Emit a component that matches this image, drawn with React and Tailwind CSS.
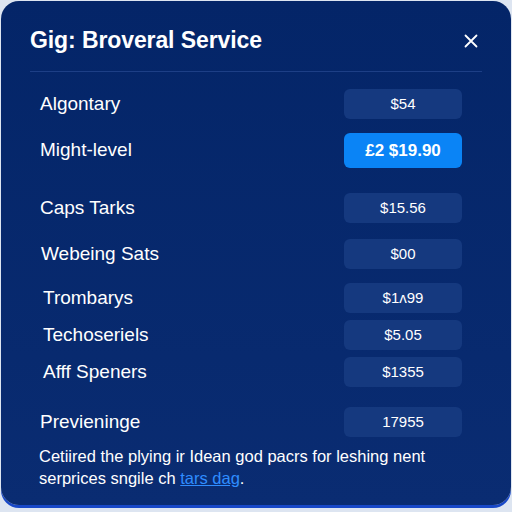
import React from "react";

const rows = [
  { label: "Algontary", price: "$54", gap: "mt-[17px]", indent: "pl-[10px]" },
  { label: "Might-level", price: "£2 $19.90", gap: "mt-[14px]", indent: "pl-[10px]", active: true },
  { label: "Caps Tarks", price: "$15.56", gap: "mt-[25px]", indent: "pl-[10px]" },
  { label: "Webeing Sats", price: "$00", gap: "mt-[16px]", indent: "pl-[11px]" },
  { label: "Trombarys", price: "$1ᴧ99", gap: "mt-[14px]", indent: "pl-[13px]" },
  { label: "Techoseriels", price: "$5.05", gap: "mt-[7px]", indent: "pl-[13px]" },
  { label: "Afff Speners", price: "$1355", gap: "mt-[7px]", indent: "pl-[13px]" },
  { label: "Previeninge", price: "17955", gap: "mt-[20px]", indent: "pl-[10px]" },
];

const App = () => {
  return (
    <div className="w-[512px] h-[512px] bg-[#dde5f1] overflow-hidden font-['Liberation_Sans',Arial,sans-serif]">
      <div className="mx-[1px] mt-[1px] h-[504px] rounded-[18px] bg-gradient-to-b from-[#042568] to-[#0a2c72] shadow-[0_3px_0_#1848c8] px-[29px] pt-[25px]">
        {/* header */}
        <div className="flex items-center justify-between h-[29px]">
          <h1 className="text-[23px] font-bold text-white tracking-[-0.1px]">
            Gig: Broveral Service
          </h1>
          <button className="mr-[4px] text-white">
            <svg width="14" height="14" viewBox="0 0 14 14" fill="none">
              <path d="M1.5 1.5 L12.5 12.5 M12.5 1.5 L1.5 12.5" stroke="white" strokeWidth="1.8" strokeLinecap="round" />
            </svg>
          </button>
        </div>
        <div className="mt-[16px] h-px bg-[#1d3f86]" />

        {/* price rows */}
        {rows.map((row) => (
          <div key={row.label} className={`flex items-center justify-between ${row.gap}`}>
            <span className={`${row.indent} text-[19px] text-white`}>{row.label}</span>
            <div
              className={`mr-[20px] w-[118px] flex items-center justify-center rounded-[6px] text-white ${
                row.active
                  ? "h-[35px] bg-[#0a84f6] text-[17px] font-bold"
                  : "h-[30px] bg-[#15397f] text-[15px]"
              }`}
            >
              {row.price}
            </div>
          </div>
        ))}

        <p className="mt-[8px] pl-[9px] text-[16.5px] leading-[22px] text-white">
          Cetiired the plying ir Idean god pacrs for leshing nent serprices sngile ch{" "}
          <span className="text-[#2f8dff] underline">tars dag</span>.
        </p>
      </div>
    </div>
  );
};

export default App;
